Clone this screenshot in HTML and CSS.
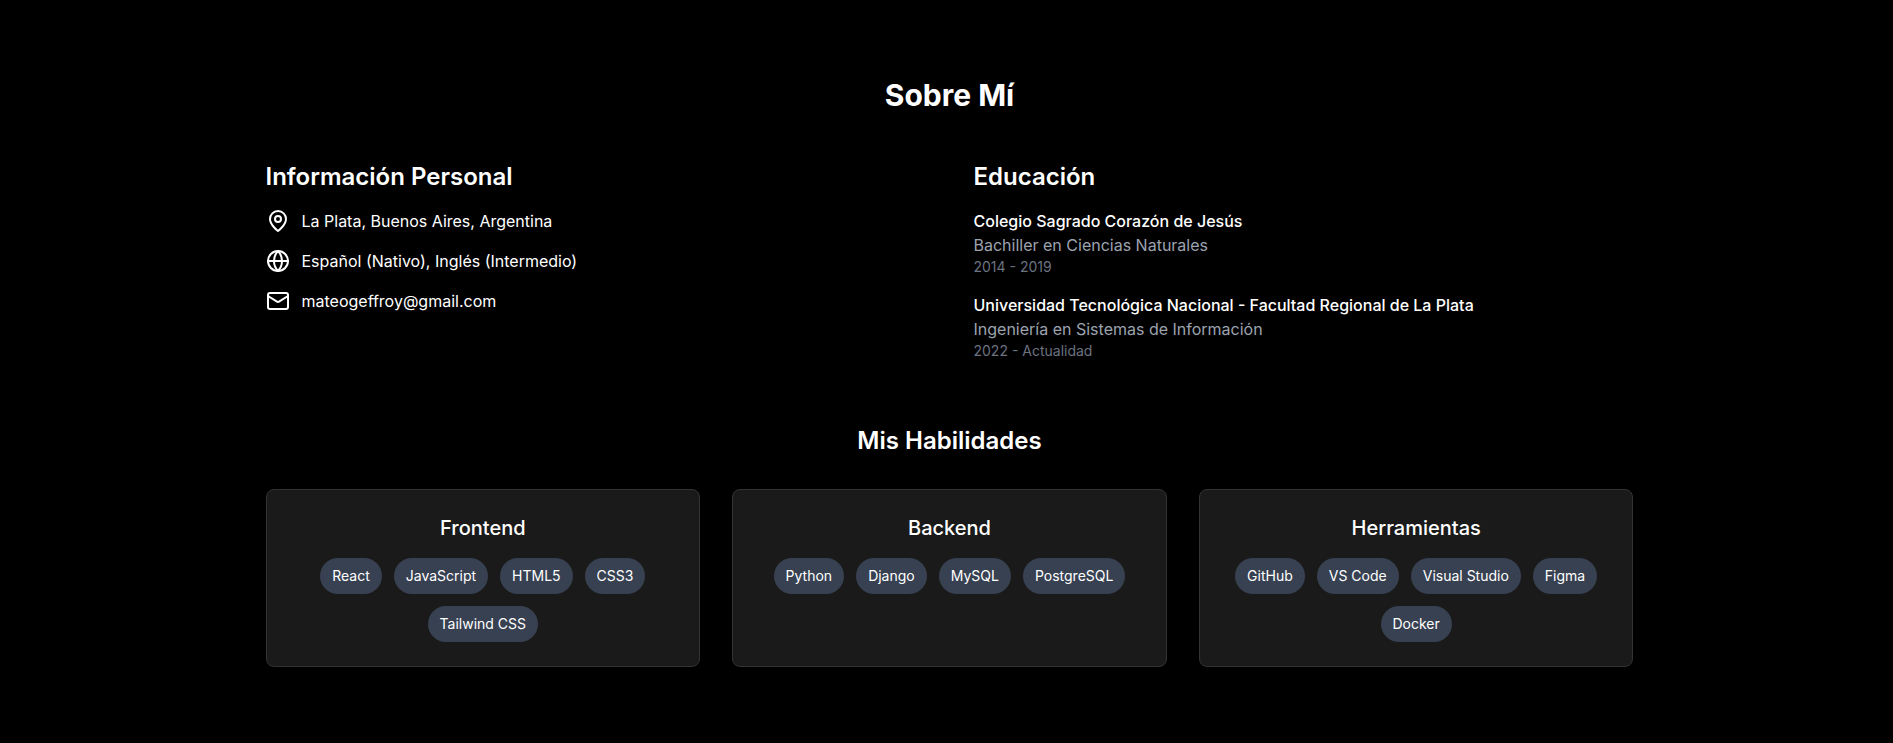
FILE: index.html
```html
<!DOCTYPE html>
<html lang="es">
<head>
<meta charset="utf-8">
<title>Sobre Mí</title>
<link rel="stylesheet" href="styles.css">
</head>
<body>
<section class="about">
  <h2 class="title">Sobre Mí</h2>
  <div class="columns">
    <div>
      <h3 class="subtitle">Información Personal</h3>
      <ul class="info">
        <li class="info-item">
          <svg class="icon" viewBox="0 0 24 24"><path d="M20 10c0 6-8 12-8 12s-8-6-8-12a8 8 0 0 1 16 0Z"/><circle cx="12" cy="10" r="3"/></svg>
          <span>La Plata, Buenos Aires, Argentina</span>
        </li>
        <li class="info-item">
          <svg class="icon" viewBox="0 0 24 24"><circle cx="12" cy="12" r="10"/><path d="M12 2a14.5 14.5 0 0 0 0 20 14.5 14.5 0 0 0 0-20"/><path d="M2 12h20"/></svg>
          <span>Español (Nativo), Inglés (Intermedio)</span>
        </li>
        <li class="info-item">
          <svg class="icon" viewBox="0 0 24 24"><rect width="20" height="16" x="2" y="4" rx="2"/><path d="m22 7-8.97 5.7a1.94 1.94 0 0 1-2.06 0L2 7"/></svg>
          <span>mateogeffroy@gmail.com</span>
        </li>
      </ul>
    </div>
    <div>
      <h3 class="subtitle">Educación</h3>
      <div class="studies">
        <div>
          <h4 class="school">Colegio Sagrado Corazón de Jesús</h4>
          <p class="degree">Bachiller en Ciencias Naturales</p>
          <p class="years">2014 - 2019</p>
        </div>
        <div>
          <h4 class="school">Universidad Tecnológica Nacional - Facultad Regional de La Plata</h4>
          <p class="degree">Ingeniería en Sistemas de Información</p>
          <p class="years">2022 - Actualidad</p>
        </div>
      </div>
    </div>
  </div>
  <h3 class="skills-title">Mis Habilidades</h3>
  <div class="cards">
    <div class="card">
      <h4 class="card-title">Frontend</h4>
      <div class="tags"><span class="tag">React</span><span class="tag">JavaScript</span><span class="tag">HTML5</span><span class="tag">CSS3</span><span class="tag">Tailwind CSS</span></div>
    </div>
    <div class="card">
      <h4 class="card-title">Backend</h4>
      <div class="tags"><span class="tag">Python</span><span class="tag">Django</span><span class="tag">MySQL</span><span class="tag">PostgreSQL</span></div>
    </div>
    <div class="card">
      <h4 class="card-title">Herramientas</h4>
      <div class="tags"><span class="tag">GitHub</span><span class="tag">VS Code</span><span class="tag">Visual Studio</span><span class="tag">Figma</span><span class="tag">Docker</span></div>
    </div>
  </div>
</section>
</body>
</html>
```
FILE: styles.css
```css
* { box-sizing: border-box; margin: 0; padding: 0; }
body {
  padding-left: 6px;
  background: #000;
  color: #fff;
  font: 400 16px/24px Inter, sans-serif;
}
.about { max-width: 1400px; margin: 0 auto; padding: 77px 16px 0; }
.title { margin-bottom: 48px; font-size: 30px; line-height: 36px; font-weight: 700; text-align: center; }
.columns { display: grid; grid-template-columns: 1fr 1fr; gap: 48px; margin-bottom: 64px; }
.subtitle { margin-bottom: 16px; font-size: 24px; line-height: 32px; font-weight: 600; }
.info, .studies { display: flex; flex-direction: column; gap: 16px; list-style: none; }
.info-item { display: flex; align-items: center; gap: 12px; }
.icon { width: 24px; height: 24px; margin: 0 -0.5px 0 0.5px; fill: none; stroke: currentColor; stroke-width: 2; stroke-linecap: round; stroke-linejoin: round; }
.school { font-size: 16px; font-weight: 500; }
.degree { color: #9ca3af; }
.years { font-size: 14px; line-height: 20px; color: #6b7280; }
.skills-title { margin-bottom: 32px; font-size: 24px; line-height: 32px; font-weight: 600; text-align: center; }
.cards { display: grid; grid-template-columns: repeat(3, 1fr); gap: 32px; }
.card { padding: 24px; border: 1px solid #333; border-radius: 8px; background: #1a1a1a; }
.card-title { margin-bottom: 16px; font-size: 20px; line-height: 28px; font-weight: 500; text-align: center; }
.tags { display: flex; flex-wrap: wrap; justify-content: center; gap: 12px; }
.tag { padding: 8px 12px; border-radius: 18px; background: #374151; font-size: 14px; line-height: 20px; font-weight: 400; }
```
